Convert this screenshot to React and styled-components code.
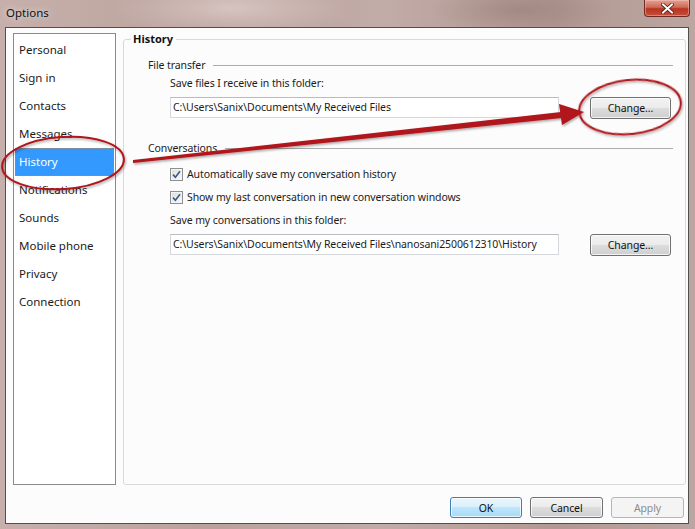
import React from 'react';
import styled, { createGlobalStyle } from 'styled-components';

const Global = createGlobalStyle`
  html, body { margin: 0; padding: 0; }
  body {
    font-family: "Noto Sans", "Open Sans", sans-serif;
    font-size: 10.5px;
    letter-spacing: -0.1px;
    color: #1b1b1b;
  }
`;

const Window = styled.div`
  position: relative;
  width: 695px;
  height: 529px;
  overflow: hidden;
  display: flex;
  flex-direction: column;
  background:
    radial-gradient(ellipse 120px 30px at 230px 8px, rgba(225, 210, 206, 0.7), transparent),
    radial-gradient(ellipse 90px 25px at 520px 10px, rgba(150, 125, 120, 0.6), transparent),
    linear-gradient(90deg, #c7b0ab 0%, #baa19c 30%, #c2aca7 55%, #b29893 80%, #bca6a1 100%);
`;

const TitleBar = styled.div`
  height: 27px;
  flex: none;
  display: flex;
  justify-content: space-between;
  align-items: flex-start;
`;

const Title = styled.span`
  padding-left: 6px;
  font-size: 11.5px;
  letter-spacing: 0;
  line-height: 26px;
  color: #111;
  text-shadow: 0 0 6px rgba(255, 255, 255, 0.8);
`;

const CloseButton = styled.div`
  width: 46px;
  height: 17px;
  margin-right: 5px;
  box-sizing: border-box;
  border: 1px solid #6e2a22;
  border-top: none;
  border-radius: 0 0 4px 4px;
  background: linear-gradient(180deg, #e3a296 0%, #cf6a57 45%, #b8341f 55%, #c5503c 100%);
  box-shadow: inset 0 0 0 1px rgba(255, 200, 190, 0.45);
  display: flex;
  align-items: center;
  justify-content: center;
`;

const Client = styled.div`
  flex: 1;
  margin: 0 6px 5px 5px;
  border: 1px solid #4f4f4f;
  background: #fcfcfc;
  display: flex;
  flex-direction: column;
`;

const Body = styled.div`
  display: flex;
  align-items: flex-start;
  gap: 7px;
  padding: 5px 2px 0 7px;
`;

const Nav = styled.ul`
  list-style: none;
  margin: 0;
  padding: 2px 0 0;
  width: 103px;
  height: 452px;
  box-sizing: border-box;
  border: 1px solid #8a8a8a;
  background: #fff;
  flex: none;
`;

const NavItem = styled.li`
  height: 28px;
  margin: 0 1px;
  padding-left: 4px;
  font-size: 11.5px;
  letter-spacing: 0;
  line-height: 28px;
  color: ${p => (p.$active ? '#fff' : '#1b1b1b')};
  background: ${p => (p.$active ? '#3399ff' : 'transparent')};
  box-shadow: ${p => (p.$active ? 'inset 0 0 0 1px #7a8ea3' : 'none')};
`;

const Panel = styled.fieldset`
  flex: 1;
  margin: -1px 0 0;
  height: 453px;
  box-sizing: border-box;
  border: 1px solid #d9d9d9;
  border-radius: 3px;
  padding: 0 12px 0 7px;
  min-width: 0;
`;

const Legend = styled.legend`
  padding: 0 3px 0 2px;
  font-weight: bold;
  font-size: 11px;
  letter-spacing: 0;
  line-height: 14px;
  color: #111;
`;

const Content = styled.div`
  padding-left: 17px;
`;

const SectionHead = styled.div`
  display: flex;
  align-items: center;
  line-height: 16px;
  margin-top: ${p => p.$top}px;
  &::after {
    content: '';
    flex: 1;
    height: 1px;
    margin-left: 8px;
    background: #acacac;
  }
`;

const Indent = styled.div`
  padding-left: 22px;
`;

const Label = styled.div`
  line-height: 16px;
  margin-top: ${p => p.$top}px;
`;

const PathRow = styled.div`
  display: flex;
  align-items: flex-start;
  gap: 31px;
  margin-top: 6px;
`;

const PathBox = styled.div`
  width: 389px;
  height: 21px;
  box-sizing: border-box;
  border: 1px solid #d5d8dc;
  border-top-color: #b9bcc0;
  background: #fff;
  padding-left: 2px;
  line-height: 19px;
  white-space: nowrap;
  overflow: hidden;
`;

const Button = styled.div`
  width: ${p => p.$w || 81}px;
  height: ${p => p.$h || 22}px;
  box-sizing: border-box;
  border: 1px solid ${p => (p.$default ? '#3c7fb1' : p.$disabled ? '#b3b7ba' : '#707070')};
  border-radius: 3px;
  background: ${p =>
    p.$disabled
      ? '#f4f4f4'
      : p.$default
      ? 'linear-gradient(180deg, #eaf6fd 0%, #d9f0fc 50%, #bee6fd 50%, #a7d9f5 100%)'
      : 'linear-gradient(180deg, #f2f2f2 0%, #ebebeb 50%, #dddddd 50%, #cfcfcf 100%)'};
  box-shadow: inset 0 0 0 1px ${p => (p.$disabled ? '#f4f4f4' : 'rgba(255,255,255,0.75)')};
  color: ${p => (p.$disabled ? '#8c8c8c' : '#111')};
  display: flex;
  align-items: center;
  justify-content: center;
  flex: none;
`;

const CheckRow = styled.div`
  display: flex;
  align-items: center;
  gap: 4px;
  line-height: 16px;
  margin-top: ${p => p.$top}px;
`;

const Box = styled.span`
  width: 13px;
  height: 13px;
  box-sizing: border-box;
  border: 1px solid #8f8f8f;
  background: linear-gradient(135deg, #dcdcdc, #fbfbfb);
  box-shadow: inset 0 0 0 1px #f4f4f4;
  display: flex;
  align-items: center;
  justify-content: center;
  flex: none;
`;

const Footer = styled.div`
  display: flex;
  justify-content: flex-end;
  gap: 8px;
  padding: 12px 4px 0 0;
`;

const Overlay = styled.svg`
  position: absolute;
  left: 0;
  top: 0;
  width: 695px;
  height: 529px;
  pointer-events: none;
`;

const navItems = [
  'Personal', 'Sign in', 'Contacts', 'Messages', 'History',
  'Notifications', 'Sounds', 'Mobile phone', 'Privacy', 'Connection',
];

const Check = () => (
  <Box>
    <svg width="9" height="9" viewBox="0 0 9 9">
      <path d="M1 4.6 L3.4 7.2 L8 1.2" fill="none" stroke="#3b5a8c" strokeWidth="1.6" />
    </svg>
  </Box>
);

export default function App() {
  return (
    <Window>
      <Global />
      <TitleBar>
        <Title>Options</Title>
        <CloseButton>
          <svg width="13" height="11" viewBox="0 0 13 11">
            <path d="M2 1.5 L11 9.5 M11 1.5 L2 9.5" stroke="#4a1a12" strokeWidth="3.6" strokeLinecap="square" />
            <path d="M2 1.5 L11 9.5 M11 1.5 L2 9.5" stroke="#fff" strokeWidth="2" strokeLinecap="square" />
          </svg>
        </CloseButton>
      </TitleBar>
      <Client>
        <Body>
          <Nav>
            {navItems.map(n => (
              <NavItem key={n} $active={n === 'History'}>{n}</NavItem>
            ))}
          </Nav>
          <Panel>
            <Legend>History</Legend>
            <Content>
              <SectionHead $top={11}>File transfer</SectionHead>
              <Indent>
                <Label $top={2}>Save files I receive in this folder:</Label>
                <PathRow>
                  <PathBox>C:\Users\Sanix\Documents\My Received Files</PathBox>
                  <Button>Change...</Button>
                </PathRow>
              </Indent>
              <SectionHead $top={21}>Conversations</SectionHead>
              <Indent>
                <CheckRow $top={10}><Check />Automatically save my conversation history</CheckRow>
                <CheckRow $top={7}><Check />Show my last conversation in new conversation windows</CheckRow>
                <Label $top={7}>Save my conversations in this folder:</Label>
                <PathRow>
                  <PathBox>C:\Users\Sanix\Documents\My Received Files\nanosani2500612310\History</PathBox>
                  <Button>Change...</Button>
                </PathRow>
              </Indent>
            </Content>
          </Panel>
        </Body>
        <Footer>
          <Button $w={72} $h={21} $default>OK</Button>
          <Button $w={73} $h={21}>Cancel</Button>
          <Button $w={73} $h={21} $disabled>Apply</Button>
        </Footer>
      </Client>
      <Overlay viewBox="0 0 695 529">
        <defs>
          <filter id="sh" x="-10%" y="-20%" width="120%" height="140%">
            <feDropShadow dx="1" dy="1.5" stdDeviation="1.2" floodColor="#000" floodOpacity="0.35" />
          </filter>
        </defs>
        <g filter="url(#sh)" fill="none" stroke="#b0151b">
          <ellipse cx="63" cy="163" rx="61" ry="26" strokeWidth="2" transform="rotate(-4 63 163)" />
          <ellipse cx="630" cy="107" rx="51" ry="27" strokeWidth="2" transform="rotate(-6 630 107)" />
          <polygon points="133,160 133,163 562,118 561,112" fill="#b0151b" stroke="none" />
          <polygon points="584,112 559,104 562,125" fill="#b0151b" stroke="none" />
        </g>
      </Overlay>
    </Window>
  );
}
